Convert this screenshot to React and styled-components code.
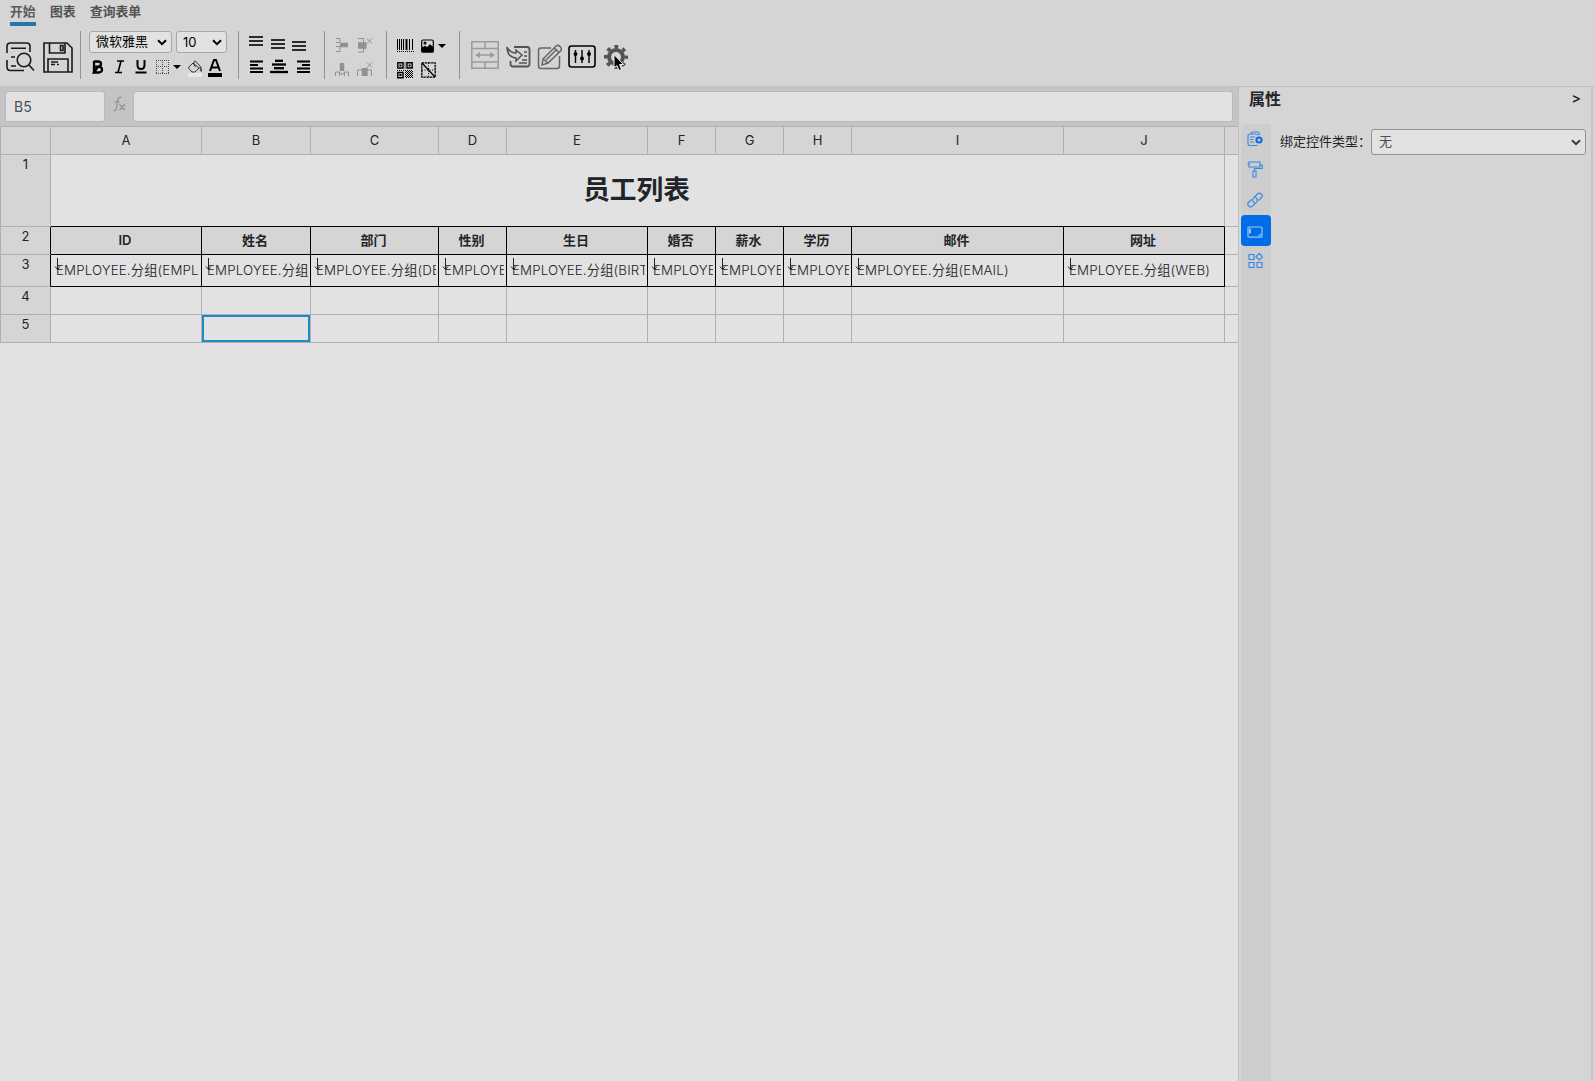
import React from "react";
import styled, { createGlobalStyle } from "styled-components";

const Global = createGlobalStyle`
  *, *::before, *::after { box-sizing: border-box; }
  body {
    margin: 0;
    background: #e2e2e2;
    color: #212529;
    font-family: Inter, "Noto Sans CJK SC", sans-serif;
    font-size: 13px;
  }
`;

const Page = styled.div`
  display: flex;
  flex-direction: column;
  height: 1081px;
  width: 1595px;
  overflow: hidden;
`;

const Header = styled.header`
  flex: none;
  height: 86px;
  background: #d5d5d5;
`;

const Tabs = styled.nav`
  display: flex;
  gap: 14.4px;
  height: 26px;
  padding-left: 10px;
`;

const Tab = styled.div`
  height: 26px;
  line-height: 23px;
  font-size: 12.8px;
  font-weight: 700;
  color: ${(p) => (p.$active ? "#5c5c5c" : "#525252")};
  border-bottom: 4px solid ${(p) => (p.$active ? "#2874a9" : "transparent")};
`;

const Toolbar = styled.div`
  display: flex;
  padding-top: 5px;
  height: 60px;
`;

const Divider = styled.div`
  flex: none;
  width: 1px;
  height: 48px;
  background: #929292;
`;

const BigGroup = styled.div`
  display: flex;
  flex: none;
  width: ${(p) => p.$w}px;
  height: 48px;
  padding: ${(p) => p.$pad};
  gap: ${(p) => p.$gap}px;
  align-items: flex-start;
`;

const Group = styled.div`
  flex: none;
  width: ${(p) => p.$w}px;
  padding-left: ${(p) => p.$left}px;
  display: flex;
  flex-direction: column;
`;

const Line = styled.div`
  display: flex;
  align-items: flex-start;
  gap: ${(p) => p.$gap || 0}px;
  height: ${(p) => p.$h}px;
  padding-top: ${(p) => p.$top || 0}px;
`;

const Select = styled.div`
  display: flex;
  align-items: center;
  justify-content: space-between;
  width: ${(p) => p.$w}px;
  height: ${(p) => p.$h || 22}px;
  padding: 0 ${(p) => p.$r || 4}px 0 ${(p) => p.$l || 6}px;
  font-size: ${(p) => p.$size || 13}px;
  line-height: 18px;
  color: ${(p) => p.$color || "#000"};
  background: #e2e2e2;
  border: 1px solid ${(p) => p.$line || "#a8a8a8"};
  border-radius: 3px;
`;

const SelectValue = styled.span`
  padding-bottom: 2px;
`;

const Svg = styled.svg`
  display: block;
  flex: none;
  margin-top: ${(p) => p.$mt || 0}px;
  margin-left: ${(p) => p.$ml || 0}px;
`;

const Body = styled.div`
  display: flex;
  flex: 1;
  min-height: 0;
`;

const Main = styled.main`
  flex: none;
  width: 1239px;
  display: flex;
  flex-direction: column;
  border-right: 1px solid #c0c0c0;
`;

const FormulaBar = styled.div`
  display: flex;
  flex: none;
  height: 40px;
  padding: 5px 5px 0 5px;
  background: #c4c4c4;
`;

const NameBox = styled.div`
  width: 100px;
  height: 31px;
  padding-left: 8px;
  line-height: 30px;
  font-size: 14px;
  color: #495057;
  background: #e2e2e2;
  border: 1px solid #b6b9c0;
  border-radius: 3px;
`;

const FxLabel = styled.div`
  width: 28px;
  padding-left: 8px;
`;

const FormulaInput = styled.div`
  flex: 1;
  height: 31px;
  background: #e2e2e2;
  border: 1px solid #b6b9c0;
  border-radius: 3px;
`;

const Sheet = styled.div`
  display: grid;
  flex: none;
  grid-template-columns: 50px 151px 109px 128px 68px 141px 68px 68px 68px 212px 161px 13px;
  grid-template-rows: 28px 72px 28px 32px 28px 28px;
  border-top: 1px solid #b0b0b0;
  border-left: 1px solid #b0b0b0;
`;

const Cell = styled.div`
  position: relative;
  min-width: 0;
  border-style: solid;
  border-width: 0 ${(p) => (p.$open ? 0 : 1)}px 1px 0;
  border-right-color: ${(p) => (p.$blackRight ? "#000" : "#b0b0b0")};
  border-bottom-color: ${(p) => (p.$blackBottom ? "#000" : "#b0b0b0")};
  background: ${(p) => (p.$shade ? "#d5d5d5" : "#e2e2e2")};
  grid-column: span ${(p) => p.$span || 1};
`;

const ColumnHead = styled(Cell)`
  text-align: center;
  line-height: 26px;
`;

const RowHead = styled(Cell)`
  text-align: center;
  line-height: 19px;
`;

const TitleCell = styled(Cell)`
  display: flex;
  align-items: center;
  justify-content: center;
  padding: 0 2px 7px 0;
  font-size: 26.67px;
  font-weight: 700;
`;

const FieldHead = styled(Cell)`
  text-align: center;
  line-height: 27px;
  font-weight: 600;
  padding-right: 2px;
`;

const FieldCell = styled(Cell)`
  padding: 0 2px 0 5px;
`;

const Expression = styled.div`
  overflow: hidden;
  white-space: nowrap;
  line-height: 31px;
  font-size: 13.33px;
  font-weight: 350;
  letter-spacing: 0.12px;
`;

const ExpandMark = styled.svg`
  position: absolute;
  left: 3px;
  top: 3px;
`;

const SelectedCell = styled(Cell)`
  &::after {
    content: "";
    position: absolute;
    inset: 0;
    border: 2px solid #1e88c4;
  }
`;

const Panel = styled.aside`
  flex: none;
  display: flex;
  flex-direction: column;
  width: 354px;
  background: #d5d5d5;
  border-top: 1px solid #c0c0c0;
  border-right: 2px solid #c4c4c4;
`;

const Gutter = styled.div`
  flex: 1;
  background: #d5d5d5;
  border-top: 1px solid #c0c0c0;
`;

const PanelHead = styled.div`
  display: flex;
  justify-content: space-between;
  height: 37px;
  padding: 0 10px 0 10px;
  font-size: 16px;
  font-weight: 600;
  line-height: 25px;
`;

const Collapse = styled.span`
  font-size: 14px;
  line-height: 21px;
`;

const PanelBody = styled.div`
  display: flex;
  flex: 1;
`;

const Rail = styled.div`
  flex: none;
  width: 30px;
  margin-left: 2px;
  background: #cdcdcd;
  border-radius: 5px 0 0 0;
`;

const RailItem = styled.div`
  display: flex;
  align-items: center;
  justify-content: center;
  height: ${(p) => p.$h}px;
  padding-top: ${(p) => p.$top || 0}px;
  padding-right: 2px;
  border-radius: 4px;
  background: ${(p) => (p.$active ? "#006de6" : "transparent")};
`;

const Form = styled.div`
  display: flex;
  flex: 1;
  align-items: flex-start;
  padding: 5px 5px 0 9px;
`;

const Label = styled.label`
  width: 91px;
  line-height: 24px;
  font-size: 13px;
  white-space: nowrap;
`;

const columns = "ABCDEFGHIJ".split("");
const fields = [
  ["ID", "EMPLOYEE.分组(EMPLOYEE_ID)"],
  ["姓名", "EMPLOYEE.分组(NAME)"],
  ["部门", "EMPLOYEE.分组(DEPT_ID)"],
  ["性别", "EMPLOYEE.分组(SEX)"],
  ["生日", "EMPLOYEE.分组(BIRTHDAY)"],
  ["婚否", "EMPLOYEE.分组(MARRY)"],
  ["薪水", "EMPLOYEE.分组(SALARY)"],
  ["学历", "EMPLOYEE.分组(DEGREE)"],
  ["邮件", "EMPLOYEE.分组(EMAIL)"],
  ["网址", "EMPLOYEE.分组(WEB)"],
];

const Icon = ({ w, h, mt, ml, children, color = "#000", sw = 1.5, fill = "none" }) => (
  <Svg width={w} height={h} viewBox={`0 0 ${w} ${h}`} $mt={mt} $ml={ml} fill={fill} stroke={color} strokeWidth={sw}>
    {children}
  </Svg>
);

const Chevron = ({ color = "#000" }) => (
  <Icon w={10} h={7} color={color} sw={2}>
    <path d="M1 1.2 5 5.2 9 1.2" />
  </Icon>
);

const Caret = ({ mt, ml }) => (
  <Icon w={8} h={4} mt={mt} ml={ml} fill="#000" color="none">
    <path d="M0 0H8L4 4Z" />
  </Icon>
);

const Preview = () => (
  <Icon w={29} h={30} color="#1a1a1a" sw={1.6}>
    <path d="M24 10V4.500Q24 1 20.500 1H4.500Q1 1 1 4.500V11M1 18V25Q1 28.500 4.500 28.500H18M5 6.200H20M5 15H9M5 24H10" />
    <circle cx="18" cy="18" r="6.800" />
    <path d="m23 23 5 5.500" />
  </Icon>
);

const Save = () => (
  <Icon w={30} h={31} color="#1a1a1a" sw={1.6}>
    <path d="M1 1H24L29 6V30H1ZM6.500 1V11H22V1M5 30V17H25V30M8 20H15M8 22.500H12M14 22.500H16" />
    <path d="M17.500 3.500H20V8.500H17.500Z" />
  </Icon>
);

const Lines = ({ mt, ml, rows, w = 14, h, sw = 1.6 }) => (
  <Icon w={w} h={h} mt={mt} ml={ml} sw={sw}>
    {rows.map(([x1, x2, y]) => (
      <path key={y} d={`M${x1} ${y}H${x2}`} />
    ))}
  </Icon>
);

const Borders = () => (
  <Icon w={13} h={14} mt={4} color="#4c4c4c" sw={1}>
    <path strokeDasharray="1 1" d="M0 .5H13M0 13.500H13M.5 0V14M12.500 0V14M6.500 0V14M0 6.500H13" />
  </Icon>
);

const Bucket = () => (
  <Icon w={15} h={17} mt={4} color="#333" sw={1}>
    <path d="M5 3 11 8 7 12H4L.8 8.500V7ZM5 3 7.500 7M6 4V2Q6 .8 7.500 1.200L12 6Q14 8 13.300 11.500Q12 10 12 7" />
    <rect x="0" y="13" width="14" height="4" fill="#e8e8e8" stroke="none" />
  </Icon>
);

const Insert = ({ kind }) => {
  const shapes = {
    left: <><path d="M1 .5H5V4.500H1M1 8.500H5V13.500H1M5 7H6" /><path d="M5 7H13" strokeWidth="4.500" /></>,
    top: <><path d="M.5 14V10H4.500V14M9.500 14V10H13.500V14M5.500 10.500 7 13 8.500 10.500" /><path d="M7 1V9" strokeWidth="4.500" /></>,
    delRow: <><path d="M1 .5H6.500V14H1M10 .5 15 5.500M15 .5 10 5.500" /><path d="M1 7.500H9.500" strokeWidth="6.500" /></>,
    delCol: <><path d="M.5 14V8H14.500V14M10 .5 15 5.500M15 .5 10 5.500" /><path d="M7.700 6V14" strokeWidth="6" /></>,
  };
  return <Icon w={16} h={15} color="#919191" sw={1}>{shapes[kind]}</Icon>;
};

const Barcode = () => (
  <Icon w={17} h={13} sw={1}>
    <path d="M.5 0V11M2.500 0V11M4.500 0V11M6.500 0V11M12.500 0V11M15.500 0V11" />
    <path d="M9.500 0V11" strokeWidth="2" />
    <path d="M0 12.500H17" strokeDasharray="1 1" />
  </Icon>
);

const Picture = () => (
  <Icon w={13} h={14} sw={1.2}>
    <rect x=".7" y="1" width="11.600" height="12" rx="1.500" />
    <path fill="#000" d="M1 9 4 7.500 6 9 9 6 12 8.500V13H1Z" />
    <circle cx="4" cy="4" r=".9" fill="#000" />
  </Icon>
);

const QrCode = () => (
  <Icon w={16} h={17} sw={1.4}>
    <path d="M.8.800H6V6H.8ZM10 .8H15.200V6H10ZM.8 10.500H6V15.700H.8Z" />
    <path strokeWidth="2" d="M2.400 3.400H4.400M11.600 3.400H13.600M2.400 13.100H4.400" />
    <path strokeWidth="1" strokeDasharray="1 1" d="M8 .5V7M0 8.500H16M8 10.500H16M8 12.500H16M8 14.500H16" />
    <path strokeWidth="1" strokeDasharray="1 1" d="M9 9.500H16M9 11.500H16M9 13.500H16M9 15.500H16" />
  </Icon>
);

const Slash = () => (
  <Icon w={15} h={16} sw={1.3}>
    <rect x=".8" y=".8" width="13.400" height="14.400" strokeDasharray="2.500 .6" />
    <path d="M1 1 14 15" />
    <path d="M1 8H14M7.500 1V15" strokeDasharray="1 1.500" strokeWidth="1" />
  </Icon>
);

const Merge = () => (
  <Icon w={28} h={28} color="#9b9b9b" sw={1.5}>
    <path d="M.8.800H27.200V27.200H.8ZM.8 7.500H27.200M.8 21H27.200M14 1V7M14 21V27M5 14H23" />
    <path fill="#9b9b9b" stroke="none" d="M4 14 9 11V17ZM24 14 19 11V17Z" />
  </Icon>
);

const Import = () => (
  <Icon w={25} h={23} color="#535353" sw={1.8}>
    <path d="M8 2H21Q23.500 2 23.500 4.500V19Q23.500 21.500 21 21.500H7Q4.500 21.500 4.500 19V16" />
    <path strokeWidth="1.500" d="M1 2Q1 12 10 13V16L16 10 10 5V8Q4 8 1 2ZM18 7H21M18 11H21M16 15H21M13 18H21" />
  </Icon>
);

const Edit = () => (
  <Icon w={26} h={26} color="#666" sw={1.5}>
    <path d="M14 4H4Q1.500 4 1.500 6.500V22Q1.500 24.500 4 24.500H20Q22.500 24.500 22.500 22V12" />
    <path d="M5 21 6 15 19 2Q21 .5 23 2.500T24 6.500L11 19ZM6 15 11 19M17 4 22 8.500M9 16 20 5" />
  </Icon>
);

const Sliders = () => (
  <Icon w={28} h={23} sw={1.4}>
    <rect x="1" y="1" width="26" height="21" rx="2.500" strokeWidth="1.600" />
    <path d="M7.500 5V18M14 5V18M21 5V18" />
    <g fill="#000" stroke="none"><circle cx="7.500" cy="9" r="2" /><circle cx="14" cy="13.500" r="2" /><circle cx="21" cy="9" r="2" /></g>
  </Icon>
);

const Gear = () => (
  <Icon w={26} h={27} color="#535353" sw={4}>
    <circle cx="12" cy="12" r="7" />
    <circle cx="12" cy="12" r="10.300" strokeWidth="3.500" strokeDasharray="3.700 4.390" strokeDashoffset="1.850" />
    <path fill="#000" stroke="#eee" strokeWidth="1" d="M10 9.500V23L13 20.500 15 25.500 17.500 24.500 15.500 19.500H19.500Z" />
  </Icon>
);

const railIcons = {
  data: (
    <Icon w={16} h={16} color="#3788e5" sw={1.1}>
      <path d="M10.500 14.500H3Q1 14.500 1 12.500V5Q1 3 3 3H9Q11 3 11 4.500M4 3Q4 1 6 1H10.500Q12.500 1 12.500 4M3 6H8M3 8.500H6M3 11H7" />
      <circle cx="12" cy="9" r="2.600" stroke="#006de6" strokeWidth="2" />
    </Icon>
  ),
  paint: (
    <Icon w={16} h={17} color="#3788e5" sw={1.1}>
      <path d="M2 1H13V6H2ZM2 3H.5M13 4H15.200V7.500H7.500V10M6 10H9V16H6Z" />
    </Icon>
  ),
  link: (
    <Icon w={16} h={16} color="#3788e5" sw={1.2}>
      <path d="M7.500 11Q4.500 8.500 6.500 6L10.500 2Q12.500.3 14.300 2T14.500 5.500L11.500 8.500M8.500 5.300Q11.500 7.500 9.500 10.200L5.500 14Q3.500 15.700 1.700 14T1.500 10.500L4.500 7.500" />
    </Icon>
  ),
  control: (
    <Icon w={16} h={12} color="#9ec5f2" sw={1.2}>
      <rect x="1" y="1" width="14" height="10.200" rx="1" />
      <path d="M3 2.500V7.500" strokeWidth="2" /><path d="M11.500 10 14 8" />
    </Icon>
  ),
  blocks: (
    <Icon w={15} h={16} color="#3788e5" sw={1.2}>
      <path d="M1 1.500H6V6.500H1ZM1 9.500H6V14.500H1ZM9 9.500H14V14.500H9ZM11.300.5 14.500 3.800 11.300 7 8 3.800Z" />
    </Icon>
  ),
};

const SheetRows = () => (
  <Sheet>
    <ColumnHead $shade />
    {columns.map((c) => <ColumnHead $shade key={c}>{c}</ColumnHead>)}
    <ColumnHead $shade $open />

    <RowHead $shade>1</RowHead>
    <TitleCell $span={10} $blackBottom>员工列表</TitleCell>
    <Cell $open />

    <RowHead $shade $blackRight>2</RowHead>
    {fields.map(([name]) => <FieldHead $shade $blackRight $blackBottom key={name}>{name}</FieldHead>)}
    <Cell $open />

    <RowHead $shade $blackRight>3</RowHead>
    {fields.map(([name, expr]) => (
      <FieldCell $blackRight $blackBottom key={name}>
        <Expression>{expr}</Expression>
        <ExpandMark width="7" height="14" fill="none" stroke="#212529">
          <path d="M3.500 0V12M1 8.500 3.500 11.500 6 8.500" />
        </ExpandMark>
      </FieldCell>
    ))}
    <Cell $open />

    <RowHead $shade>4</RowHead>
    {columns.map((c) => <Cell key={c} />)}
    <Cell $open />

    <RowHead $shade>5</RowHead>
    {columns.map((c) => (c === "B" ? <SelectedCell key={c} /> : <Cell key={c} />))}
    <Cell $open />
  </Sheet>
);

export default function App() {
  return (
    <Page>
      <Global />
      <Header>
        <Tabs>
          <Tab $active>开始</Tab>
          <Tab>图表</Tab>
          <Tab>查询表单</Tab>
        </Tabs>
        <Toolbar>
          <BigGroup $w={80} $pad="11px 0 0 6px" $gap={8}>
            <Preview />
            <Save />
          </BigGroup>
          <Divider />
          <Group $w={157} $left={8}>
            <Line $h={25} $gap={4}>
              <Select $w={83}><SelectValue>微软雅黑</SelectValue><Chevron /></Select>
              <Select $w={51}>10<Chevron /></Select>
            </Line>
            <Line $h={23}>
              <Icon w={12} h={14} mt={4} ml={3} sw={2.3}><path d="M2 1.500H6Q9 1.500 9 4T6 6.700H2M6 6.700Q10 6.700 10 9.700T6 12.500H2ZM2 1V13" /></Icon>
              <Icon w={10} h={14} mt={4} ml={11} sw={1.6}><path d="M2 1H9M0 12.500H7M6 1 3 12.500" /></Icon>
              <Icon w={12} h={14} mt={4} ml={10} sw={2}><path d="M2.500 0V5Q2.500 9 6 9T9.500 5V0M.5 12.500H11.500" /></Icon>
              <Svg as="span" $ml={9}><Borders /></Svg>
              <Caret mt={9} ml={4} />
              <Svg as="span" $ml={7}><Bucket /></Svg>
              <Icon w={14} h={18} mt={3} ml={5} sw={2}><path d="M2 12 6 1H8L12 12M3.500 8.500H10.500" /><path d="M0 16H14" strokeWidth="4" /></Icon>
            </Line>
          </Group>
          <Divider />
          <Group $w={85} $left={10}>
            <Line $h={25}>
              <Lines mt={5} h={10} rows={[[0, 14, 1], [0, 14, 5], [0, 14, 9]]} />
              <Lines mt={8} ml={8} h={10} rows={[[0, 14, 1], [0, 14, 5], [0, 14, 9]]} />
              <Lines mt={10} ml={7} h={10} rows={[[0, 14, 1], [0, 14, 5], [0, 14, 9]]} />
            </Line>
            <Line $h={23}>
              <Lines mt={4} ml={1} h={14} w={13} sw={2} rows={[[0, 13, 1.5], [0, 8, 5], [0, 13, 8.5], [0, 13, 12]]} />
              <Lines mt={3} ml={7} h={15} w={18} sw={2.3} rows={[[5, 13, 1.8], [2, 16, 5.5], [4, 14, 9.2], [0, 18, 13]]} />
              <Lines mt={4} ml={9} h={14} w={13} sw={2} rows={[[0, 13, 1.5], [5, 13, 5], [0, 13, 8.5], [0, 13, 12]]} />
            </Line>
          </Group>
          <Divider />
          <Group $w={61} $left={10}>
            <Line $h={25} $top={7} $gap={6}><Insert kind="left" /><Insert kind="delRow" /></Line>
            <Line $h={23} $top={6} $gap={6}><Insert kind="top" /><Insert kind="delCol" /></Line>
          </Group>
          <Divider />
          <Group $w={72} $left={10}>
            <Line $h={31} $top={8} $gap={7}><Barcode /><Picture /><Caret mt={5} ml={-3} /></Line>
            <Line $h={17} $gap={8}><QrCode /><Slash /></Line>
          </Group>
          <Divider />
          <BigGroup $w={180} $pad="10px 0 0 11px" $gap={0}>
            <Merge />
            <Svg as="span" $ml={7} $mt={4}><Import /></Svg>
            <Svg as="span" $ml={6} $mt={3}><Edit /></Svg>
            <Svg as="span" $ml={5} $mt={4}><Sliders /></Svg>
            <Svg as="span" $ml={8} $mt={4}><Gear /></Svg>
          </BigGroup>
        </Toolbar>
      </Header>
      <Body>
        <Main>
          <FormulaBar>
            <NameBox>B5</NameBox>
            <FxLabel>
              <Icon w={14} h={17} mt={5} color="#8e8e8e" sw={1.2}>
                <path d="M8.500 1.500Q5 .5 4.500 5L3.500 12Q3 15 .5 14.500M1 6H7M6.500 8.500 11.800 14M11.800 8.500 6.500 14" />
              </Icon>
            </FxLabel>
            <FormulaInput />
          </FormulaBar>
          <SheetRows />
        </Main>
        <Panel>
          <PanelHead>属性<Collapse>&gt;</Collapse></PanelHead>
          <PanelBody>
            <Rail>
              <RailItem $h={30}>{railIcons.data}</RailItem>
              <RailItem $h={31}>{railIcons.paint}</RailItem>
              <RailItem $h={30}>{railIcons.link}</RailItem>
              <RailItem $h={31} $top={3} $active>{railIcons.control}</RailItem>
              <RailItem $h={30}>{railIcons.blocks}</RailItem>
            </Rail>
            <Form>
              <Label>绑定控件类型：</Label>
              <Select $w={215} $h={26} $l={7} $line="#929292" $color="#495057"><SelectValue>无</SelectValue><Chevron color="#343a40" /></Select>
            </Form>
          </PanelBody>
        </Panel>
        <Gutter />
      </Body>
    </Page>
  );
}
